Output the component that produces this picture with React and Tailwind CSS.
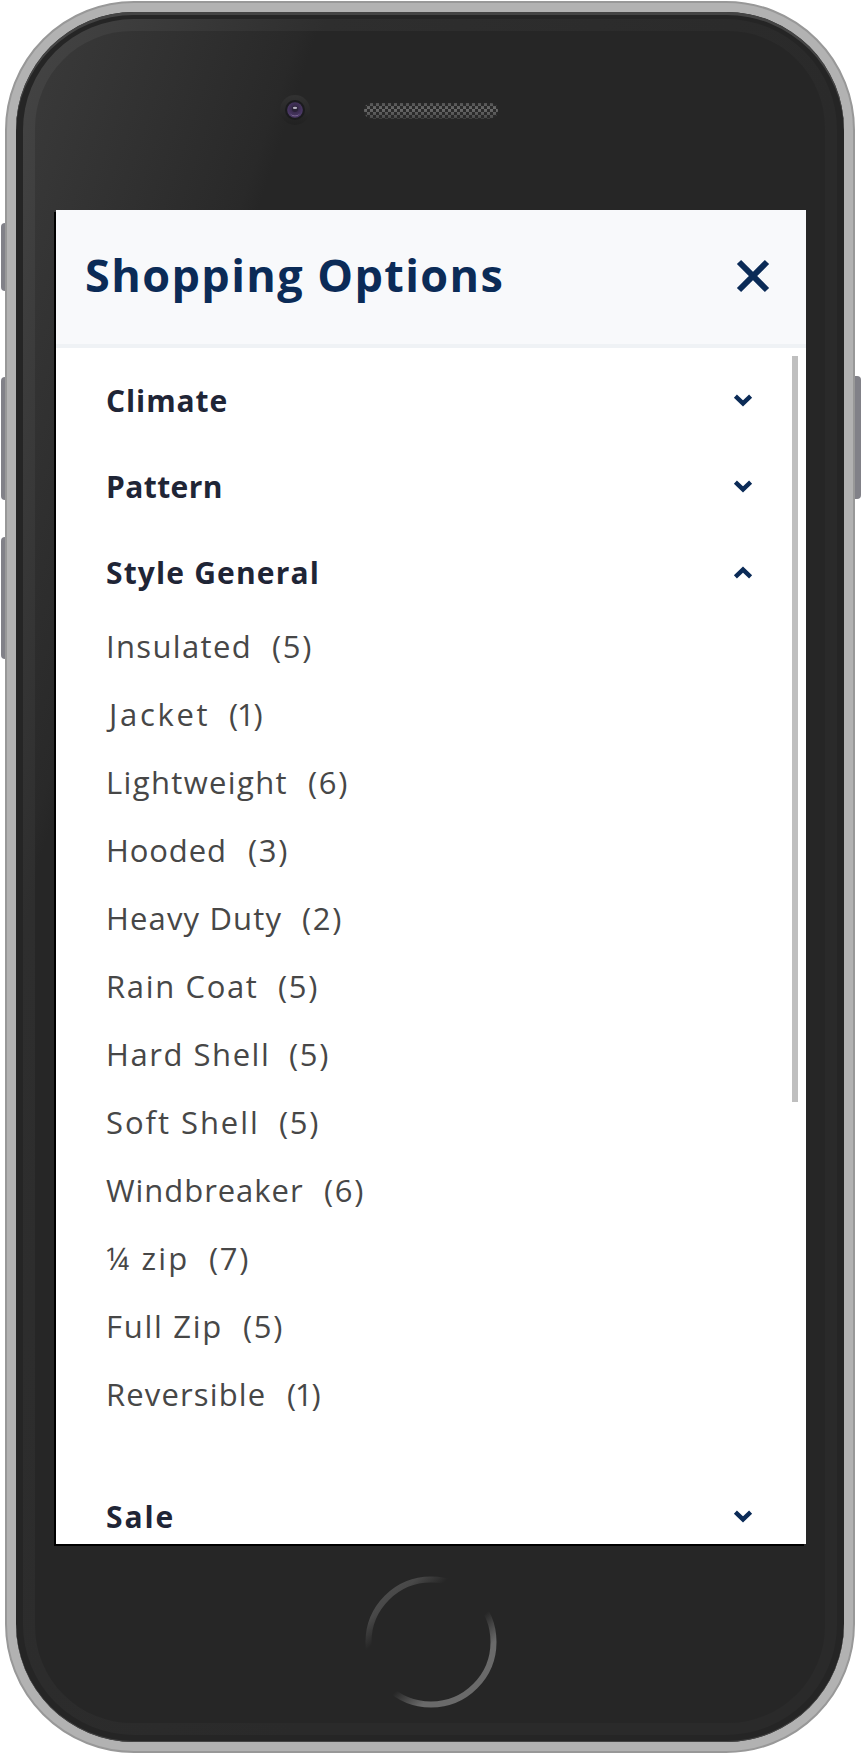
const styles = [
  { name: "Insulated", count: 5, box: "w-[166px] tracking-[1.35px]" },
  { name: "Jacket", count: 1, box: "w-[124px] pl-[3px] tracking-[2.7px]" },
  { name: "Lightweight", count: 6, box: "w-[202px] tracking-[1.35px]" },
  { name: "Hooded", count: 3, box: "w-[142px] tracking-[0.9px]" },
  { name: "Heavy Duty", count: 2, box: "w-[196px] tracking-[1.15px]" },
  { name: "Rain Coat", count: 5, box: "w-[172px] tracking-[1.65px]" },
  { name: "Hard Shell", count: 5, box: "w-[183px] tracking-[1.55px]" },
  { name: "Soft Shell", count: 5, box: "w-[173px] tracking-[1.95px]" },
  { name: "Windbreaker", count: 6, box: "w-[218px] tracking-[0.95px]" },
  { name: "¼ zip", count: 7, box: "w-[103px] tracking-[2.2px]" },
  { name: "Full Zip", count: 5, box: "w-[137px] tracking-[1.7px]" },
  { name: "Reversible", count: 1, box: "w-[182px] tracking-[1.15px]" },
];

function Chevron({ open }) {
  return (
    <svg
      className={open ? "mt-0.5" : ""}
      width="20"
      height="14"
      viewBox="0 0 20 14"
      fill="none"
      stroke="#0b2b57"
      strokeWidth="4.4"
    >
      <path d={open ? "M2.4 10.8 10 3.6l7.6 7.2" : "M2.4 3.2 10 10.4l7.6-7.2"} />
    </svg>
  );
}

function SectionHeader({ title, open, tracking }) {
  return (
    <button className="flex h-[86px] w-full shrink-0 items-center justify-between pr-[53px] pl-[50px] text-left">
      <span className={`text-[30px] font-bold text-[#1f2536] ${tracking}`}>{title}</span>
      <Chevron open={open} />
    </button>
  );
}

function Camera() {
  return (
    <svg width="30" height="30" viewBox="0 0 30 30">
      <defs>
        <linearGradient id="camRim" x1="0" y1="0" x2="0" y2="1">
          <stop offset="0" stopColor="#323232" />
          <stop offset="1" stopColor="#212121" />
        </linearGradient>
        <radialGradient id="camLens" cx="0.5" cy="0.4" r="0.6">
          <stop offset="0" stopColor="#2a2238" />
          <stop offset="0.45" stopColor="#3c2d52" />
          <stop offset="1" stopColor="#503c6c" />
        </radialGradient>
      </defs>
      <circle cx="15" cy="15" r="15" fill="url(#camRim)" />
      <circle cx="15" cy="15" r="10" fill="#1b1b1e" />
      <circle cx="15" cy="15" r="7.8" fill="url(#camLens)" />
      <path d="M9.8 18.5a6.4 6.4 0 0 0 10.4 0 8 8 0 0 1-10.4 0z" fill="#7d6d94" />
      <circle cx="15" cy="14" r="3" fill="#292236" />
      <ellipse cx="15" cy="12.9" rx="2.2" ry="1.1" fill="#b9b4c4" />
    </svg>
  );
}

function Speaker() {
  return (
    <svg width="134" height="16" viewBox="0 0 134 16">
      <defs>
        <pattern id="mesh" width="6" height="6" patternUnits="userSpaceOnUse">
          <rect width="6" height="6" fill="#2b2b2b" />
          <rect width="3" height="3" fill="#6a6a6a" />
          <rect x="3" y="3" width="3" height="3" fill="#6a6a6a" />
        </pattern>
        <linearGradient id="meshShade" x1="0" y1="0" x2="0" y2="1">
          <stop offset="0" stopColor="#262626" stopOpacity="0.35" />
          <stop offset="0.4" stopColor="#262626" stopOpacity="0" />
          <stop offset="1" stopColor="#262626" stopOpacity="0.5" />
        </linearGradient>
      </defs>
      <rect width="134" height="15.5" rx="7.7" fill="url(#mesh)" />
      <rect width="134" height="15.5" rx="7.7" fill="url(#meshShade)" />
    </svg>
  );
}

function HomeButton() {
  return (
    <svg width="132" height="132" viewBox="0 0 132 132" fill="none">
      <defs>
        <linearGradient id="ring" gradientUnits="userSpaceOnUse" x1="23.4" y1="17.1" x2="108.6" y2="114.9">
          <stop offset="0" stopColor="#4b4b4b" />
          <stop offset="0.06" stopColor="#484848" />
          <stop offset="0.22" stopColor="#484848" stopOpacity="0" />
          <stop offset="0.61" stopColor="#6a6a6a" stopOpacity="0" />
          <stop offset="0.82" stopColor="#6a6a6a" />
          <stop offset="1" stopColor="#6a6a6a" />
        </linearGradient>
      </defs>
      <circle cx="66" cy="66" r="62.5" stroke="url(#ring)" strokeWidth="6" />
    </svg>
  );
}

function Screen() {
  return (
    <div className="ml-[21px] flex h-[1334px] w-[750px] flex-col overflow-hidden bg-white shadow-[-2px_2px_0_#000]">
      <header className="flex h-[138px] shrink-0 items-center justify-between border-b-4 border-[#eff2f5] bg-[#f8f9fb] pr-[35px] pb-1 pl-[29px]">
        <h1 className="text-[45px] font-bold tracking-[1.4px] text-[#0b2b57]">Shopping Options</h1>
        <svg className="mt-0.5" width="36" height="36" viewBox="0 0 36 36" fill="none" stroke="#0b2b57" strokeWidth="6">
          <path d="M4 4l28 28M32 4L4 32" />
        </svg>
      </header>
      <main className="relative flex flex-1 flex-col overflow-hidden pt-[9px]">
        <SectionHeader title="Climate" tracking="tracking-[0.9px]" />
        <SectionHeader title="Pattern" tracking="tracking-[0.4px]" />
        <SectionHeader title="Style General" open tracking="tracking-[1.15px]" />
        <ul className="-mt-[3px] mb-[45px] shrink-0 pl-[50px] text-[31px] text-[#474747]">
          {styles.map((s) => (
            <li key={s.name} className="flex h-[68px] items-center whitespace-nowrap">
              <span className={s.box}>{s.name}</span>
              <span className={s.count === 1 ? "-tracking-[1.2px] -ml-px" : "tracking-[1.7px]"}>({s.count})</span>
            </li>
          ))}
        </ul>
        <SectionHeader title="Sale" tracking="tracking-[1.9px]" />
        <div className="absolute top-2 right-2 h-[746px] w-1.5 bg-[#bfbfbf]" />
      </main>
    </div>
  );
}

export default function App() {
  return (
    <div className="relative h-[1754px] w-[862px] overflow-hidden bg-white pt-px pl-[5px] font-['Open_Sans',sans-serif]">
      <div className="absolute top-[223px] left-px h-[68px] w-[10px] rounded bg-[#818188]" />
      <div className="absolute top-[377px] left-px h-[123px] w-[10px] rounded bg-[#818188]" />
      <div className="absolute top-[537px] left-px h-[122px] w-[10px] rounded bg-[#818188]" />
      <div className="absolute top-[376px] left-[851px] h-[123px] w-[10px] rounded bg-[#818188]" />
      <div className="relative h-[1752px] w-[850px] rounded-[129px] border-2 border-[#989898] bg-[#b2b2b2] p-[9px]">
        <div className="h-full w-full rounded-[118px] bg-[#252525] p-[7px] shadow-[inset_0_3px_0_#444,inset_0_-1px_0_#444]">
          <div className="h-full w-full rounded-[111px] bg-[linear-gradient(108.5deg,#454545_0px,#2e2e2e_290px,#2a2a2a_800px)] p-3">
            <div className="flex h-full w-full flex-col rounded-[97px] bg-[linear-gradient(108.5deg,#3a3a3a_0px,#292929_250px,#262626_268px)]">
              <div className="flex h-[179px] shrink-0 items-center gap-[54px] pb-[21px] pl-[244.5px]">
                <Camera />
                <div className="pt-px">
                  <Speaker />
                </div>
              </div>
              <div className="shrink-0">
                <Screen />
              </div>
              <div className="flex justify-center pt-8 pl-px">
                <HomeButton />
              </div>
            </div>
          </div>
        </div>
      </div>
    </div>
  );
}
